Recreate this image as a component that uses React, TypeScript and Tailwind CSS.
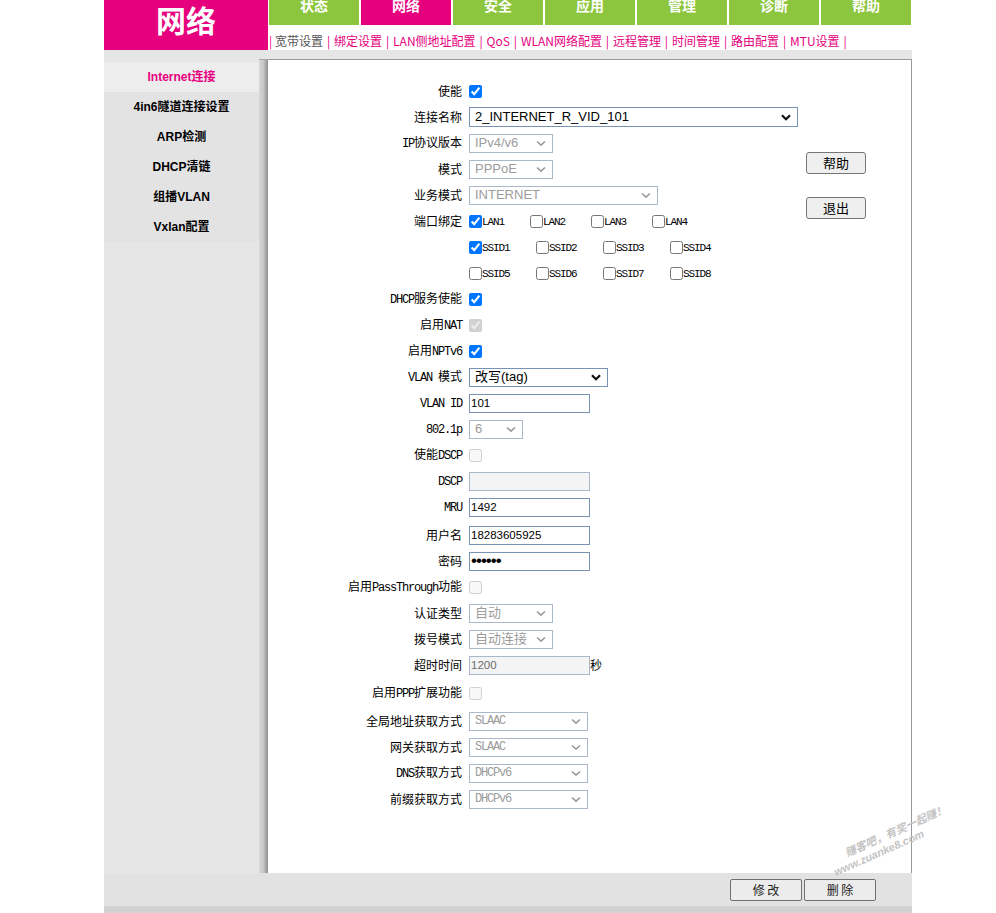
import React from "react";
import clsx from "clsx";

const MONO12 = "font-['Liberation_Mono',monospace] text-[12px] tracking-[-1.2px]";

function Mixed({ text, latin }: { text: string; latin: string }) {
  const parts = text.split(/([\x20-\x7E]+)/).filter((p) => p.length > 0);
  return (
    <>
      {parts.map((p, i) =>
        /^[\x20-\x7E]+$/.test(p) ? (
          <span key={i} className={latin}>
            {p}
          </span>
        ) : (
          <span key={i}>{p}</span>
        )
      )}
    </>
  );
}

function Chevron({ disabled }: { disabled?: boolean }) {
  return disabled ? (
    <svg width="10" height="7" viewBox="0 0 10 7" className="shrink-0">
      <path d="M1 1.5 L5 5.2 L9 1.5" fill="none" stroke="#9a9a9a" strokeWidth="1.6" />
    </svg>
  ) : (
    <svg width="10" height="7" viewBox="0 0 10 7" className="shrink-0">
      <path d="M1 1.2 L5 5.2 L9 1.2" fill="none" stroke="#111" strokeWidth="2.2" />
    </svg>
  );
}

function Sel({
  value,
  disabled,
  className,
  mono,
}: {
  value: string;
  disabled?: boolean;
  className: string;
  mono?: boolean;
}) {
  return (
    <div
      className={clsx(
        "flex items-center justify-between border bg-white pl-[5px] pr-[6px]",
        disabled ? "border-[#a9b9cb] text-[#9c9c9c]" : "border-[#7893b3] text-black",
        className
      )}
    >
      <span
        className={
          mono
            ? "font-['Liberation_Mono',monospace] text-[12px] tracking-[-1.2px] leading-[14px]"
            : "font-['Liberation_Sans','Noto_Sans_CJK_SC',sans-serif] text-[13px] leading-[16px]"
        }
      >
        {value}
      </span>
      <Chevron disabled={disabled} />
    </div>
  );
}

function Txt({
  value,
  disabled,
  password,
}: {
  value: string;
  disabled?: boolean;
  password?: boolean;
}) {
  return (
    <input
      type={password ? "password" : "text"}
      defaultValue={value}
      disabled={disabled}
      className={clsx(
        "h-[19px] w-[121px] border px-[1px] font-['Liberation_Sans',sans-serif] leading-none outline-none",
        password ? "text-[17px] tracking-[-1px]" : "text-[11.5px]",
        disabled ? "border-[#a9b9cb] bg-[#f4f4f4] text-[#6d6d6d]" : "border-[#7893b3] bg-white text-black"
      )}
    />
  );
}

function Cb({ checked, disabled }: { checked?: boolean; disabled?: boolean }) {
  return (
    <input
      type="checkbox"
      defaultChecked={checked}
      disabled={disabled}
      className="m-0 h-[13px] w-[13px] shrink-0"
    />
  );
}

function Row({
  label,
  children,
  className,
}: {
  label: string;
  children?: React.ReactNode;
  className?: string;
}) {
  return (
    <div className={clsx("flex h-[26px] items-center", className)}>
      <div className="w-[194px] shrink-0 text-right font-['Noto_Sans_CJK_SC',sans-serif] text-[12px] leading-[16px] text-black">
        <Mixed text={label} latin={MONO12} />
      </div>
      <div className="ml-[7px] flex items-center">{children}</div>
    </div>
  );
}

function CbItem({
  label,
  checked,
  wide,
}: {
  label: string;
  checked?: boolean;
  wide?: boolean;
}) {
  return (
    <div className={clsx("flex items-center", wide ? "w-[67px]" : "w-[61px]")}>
      <Cb checked={checked} />
      <span className="mt-[3px] font-['Liberation_Mono',monospace] text-[11px] tracking-[-1.1px] text-black">
        {label}
      </span>
    </div>
  );
}

const tabs = ["状态", "网络", "安全", "应用", "管理", "诊断", "帮助"];
const subnav = ["宽带设置", "绑定设置", "LAN侧地址配置", "QoS", "WLAN网络配置", "远程管理", "时间管理", "路由配置", "MTU设置"];
const side = ["Internet连接", "4in6隧道连接设置", "ARP检测", "DHCP清链", "组播VLAN", "Vxlan配置"];

export default function App() {
  return (
    <div className="relative min-h-screen bg-white font-['Noto_Sans_CJK_SC',sans-serif]">
      <div className="ml-[104px] w-[808px]">
        {/* header */}
        <div className="flex h-[50px]">
          <div className="flex w-[164px] justify-center bg-[#e6007e] text-[30px] font-bold leading-[38px] text-white">
            网络
          </div>
          <div className="flex flex-1 flex-col">
            <div className="ml-[1px] flex h-[25px] gap-[2px]">
              {tabs.map((t) => (
                <div
                  key={t}
                  className={clsx(
                    "w-[90px] overflow-hidden text-center text-[14px] font-bold leading-[16px] text-white",
                    t === "网络" ? "bg-[#e6007e]" : "bg-[#8cc63f]"
                  )}
                >
                  <div className="-mt-[3px]">{t}</div>
                </div>
              ))}
            </div>
            <div className="ml-[1px] mt-[8px] flex whitespace-nowrap text-[12px] leading-[16px] text-[#e6007e]">
              <span className="w-[6px]">|</span>
              {subnav.map((s) => (
                <React.Fragment key={s}>
                  <span className={s === "宽带设置" ? "text-[#555]" : "text-[#e6007e]"}>{s}</span>
                  <span className="w-[11px] text-center">|</span>
                </React.Fragment>
              ))}
            </div>
          </div>
        </div>

        {/* body */}
        <div className="flex bg-[#e6e6e6]">
          <div className="w-[155px] pt-[12px]">
            {side.map((s, i) => (
              <div
                key={s}
                className={clsx(
                  "flex h-[30px] items-center justify-center font-['Liberation_Sans','Noto_Sans_CJK_SC',sans-serif] text-[12px] font-bold",
                  i === 0 ? "bg-[#ededed] text-[#e6007e]" : "bg-[#e3e3e3] text-black"
                )}
              >
                {s}
              </div>
            ))}
          </div>
          <div className="flex-1 pt-[9px]">
            <div className="flex h-[814px]">
              <div className="w-[9px] border-t border-[#aaa] bg-gradient-to-r from-[#d8d8d8] via-[#c6c6c6] to-[#8c8c8c]" />
              <div className="flex flex-1 border-r border-t border-[#999] bg-white pt-[18px]">
                <div className="w-[538px]">
                  <Row label="使能">
                    <Cb checked />
                  </Row>
                  <Row label="连接名称">
                    <Sel value="2_INTERNET_R_VID_101" className="h-[20px] w-[329px]" />
                  </Row>
                  <Row label="IP协议版本">
                    <Sel value="IPv4/v6" disabled className="h-[19px] w-[84px]" />
                  </Row>
                  <Row label="模式">
                    <Sel value="PPPoE" disabled className="h-[19px] w-[84px]" />
                  </Row>
                  <Row label="业务模式">
                    <Sel value="INTERNET" disabled className="h-[19px] w-[189px]" />
                  </Row>
                  <Row label="端口绑定">
                    <CbItem label="LAN1" checked />
                    <CbItem label="LAN2" />
                    <CbItem label="LAN3" />
                    <CbItem label="LAN4" />
                  </Row>
                  <Row label="">
                    <CbItem label="SSID1" checked wide />
                    <CbItem label="SSID2" wide />
                    <CbItem label="SSID3" wide />
                    <CbItem label="SSID4" wide />
                  </Row>
                  <Row label="">
                    <CbItem label="SSID5" wide />
                    <CbItem label="SSID6" wide />
                    <CbItem label="SSID7" wide />
                    <CbItem label="SSID8" wide />
                  </Row>
                  <Row label="DHCP服务使能">
                    <Cb checked />
                  </Row>
                  <Row label="启用NAT">
                    <Cb checked disabled />
                  </Row>
                  <Row label="启用NPTv6">
                    <Cb checked />
                  </Row>
                  <Row label="VLAN 模式">
                    <Sel value="改写(tag)" className="h-[19px] w-[139px]" />
                  </Row>
                  <Row label="VLAN ID">
                    <Txt value="101" />
                  </Row>
                  <Row label="802.1p">
                    <Sel value="6" disabled className="h-[19px] w-[54px]" />
                  </Row>
                  <Row label="使能DSCP">
                    <Cb disabled />
                  </Row>
                  <Row label="DSCP">
                    <Txt value="" disabled />
                  </Row>
                  <Row label="MRU">
                    <Txt value="1492" />
                  </Row>
                  <Row label="用户名" className="mt-[2px]">
                    <Txt value="18283605925" />
                  </Row>
                  <Row label="密码">
                    <Txt value="123456" password />
                  </Row>
                  <Row label="启用PassThrough功能">
                    <Cb disabled />
                  </Row>
                  <Row label="认证类型">
                    <Sel value="自动" disabled className="h-[19px] w-[84px]" />
                  </Row>
                  <Row label="拨号模式">
                    <Sel value="自动连接" disabled className="h-[19px] w-[84px]" />
                  </Row>
                  <Row label="超时时间">
                    <Txt value="1200" disabled />
                    <span className="text-[12px] leading-[16px] text-black">秒</span>
                  </Row>
                  <Row label="启用PPP扩展功能" className="mt-[2px]">
                    <Cb disabled />
                  </Row>
                  <Row label="全局地址获取方式" className="mt-[2px]">
                    <Sel value="SLAAC" disabled mono className="h-[19px] w-[119px]" />
                  </Row>
                  <Row label="网关获取方式">
                    <Sel value="SLAAC" disabled mono className="h-[19px] w-[119px]" />
                  </Row>
                  <Row label="DNS获取方式">
                    <Sel value="DHCPv6" disabled mono className="h-[19px] w-[119px]" />
                  </Row>
                  <Row label="前缀获取方式">
                    <Sel value="DHCPv6" disabled mono className="h-[19px] w-[119px]" />
                  </Row>
                </div>
                <div className="flex flex-col gap-[23px] pt-[74px]">
                  <button className="h-[22px] w-[60px] rounded-[3px] border border-[#767676] bg-[#efefef] text-[13px] leading-[16px] text-black">
                    帮助
                  </button>
                  <button className="h-[22px] w-[60px] rounded-[3px] border border-[#767676] bg-[#efefef] text-[13px] leading-[16px] text-black">
                    退出
                  </button>
                </div>
              </div>
            </div>
          </div>
        </div>

        {/* footer */}
        <div className="flex h-[33px] items-start justify-end gap-[2px] bg-[#e2e2e2] pr-[36px] pt-[6px]">
          <button className="h-[22px] w-[72px] rounded-[2px] border border-[#707070] bg-[#ececec] text-[12px] leading-[16px] text-[#222]">
            修 改
          </button>
          <button className="h-[22px] w-[72px] rounded-[2px] border border-[#707070] bg-[#ececec] text-[12px] leading-[16px] text-[#222]">
            删 除
          </button>
        </div>
        <div className="h-[7px] bg-[#d2d2d2]" />
      </div>

      {/* watermark */}
      <div className="pointer-events-none absolute left-[826px] top-[826px] -rotate-[24deg] text-[11px] font-bold italic leading-[14px] text-[#c4c4c4]">
        <div className="pl-[18px]">赚客吧，有奖一起赚！</div>
        <div className="font-['Liberation_Sans',sans-serif]">www.zuanke8.com</div>
      </div>
    </div>
  );
}
